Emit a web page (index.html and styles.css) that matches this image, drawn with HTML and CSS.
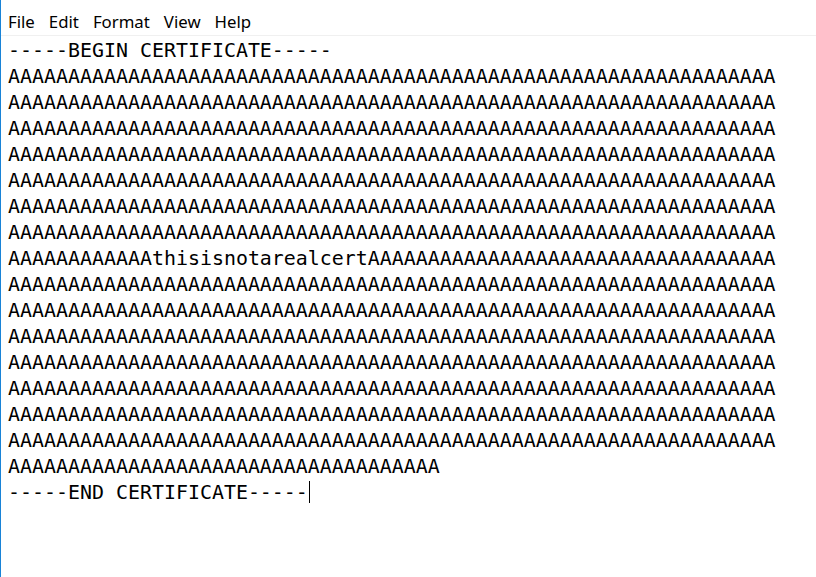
FILE: index.html
```html
<!DOCTYPE html>
<html>
<head>
<meta charset="utf-8">
<link rel="stylesheet" href="styles.css">
</head>
<body>
<div class="window">
  <nav class="menubar">
    <span class="menu-item">File</span>
    <span class="menu-item">Edit</span>
    <span class="menu-item">Format</span>
    <span class="menu-item">View</span>
    <span class="menu-item">Help</span>
  </nav>
  <div class="editor">
    <div class="line">-----BEGIN CERTIFICATE-----</div>
    <div class="line">AAAAAAAAAAAAAAAAAAAAAAAAAAAAAAAAAAAAAAAAAAAAAAAAAAAAAAAAAAAAAAAA</div>
    <div class="line">AAAAAAAAAAAAAAAAAAAAAAAAAAAAAAAAAAAAAAAAAAAAAAAAAAAAAAAAAAAAAAAA</div>
    <div class="line">AAAAAAAAAAAAAAAAAAAAAAAAAAAAAAAAAAAAAAAAAAAAAAAAAAAAAAAAAAAAAAAA</div>
    <div class="line">AAAAAAAAAAAAAAAAAAAAAAAAAAAAAAAAAAAAAAAAAAAAAAAAAAAAAAAAAAAAAAAA</div>
    <div class="line">AAAAAAAAAAAAAAAAAAAAAAAAAAAAAAAAAAAAAAAAAAAAAAAAAAAAAAAAAAAAAAAA</div>
    <div class="line">AAAAAAAAAAAAAAAAAAAAAAAAAAAAAAAAAAAAAAAAAAAAAAAAAAAAAAAAAAAAAAAA</div>
    <div class="line">AAAAAAAAAAAAAAAAAAAAAAAAAAAAAAAAAAAAAAAAAAAAAAAAAAAAAAAAAAAAAAAA</div>
    <div class="line">AAAAAAAAAAAAthisisnotarealcertAAAAAAAAAAAAAAAAAAAAAAAAAAAAAAAAAA</div>
    <div class="line">AAAAAAAAAAAAAAAAAAAAAAAAAAAAAAAAAAAAAAAAAAAAAAAAAAAAAAAAAAAAAAAA</div>
    <div class="line">AAAAAAAAAAAAAAAAAAAAAAAAAAAAAAAAAAAAAAAAAAAAAAAAAAAAAAAAAAAAAAAA</div>
    <div class="line">AAAAAAAAAAAAAAAAAAAAAAAAAAAAAAAAAAAAAAAAAAAAAAAAAAAAAAAAAAAAAAAA</div>
    <div class="line">AAAAAAAAAAAAAAAAAAAAAAAAAAAAAAAAAAAAAAAAAAAAAAAAAAAAAAAAAAAAAAAA</div>
    <div class="line">AAAAAAAAAAAAAAAAAAAAAAAAAAAAAAAAAAAAAAAAAAAAAAAAAAAAAAAAAAAAAAAA</div>
    <div class="line">AAAAAAAAAAAAAAAAAAAAAAAAAAAAAAAAAAAAAAAAAAAAAAAAAAAAAAAAAAAAAAAA</div>
    <div class="line">AAAAAAAAAAAAAAAAAAAAAAAAAAAAAAAAAAAAAAAAAAAAAAAAAAAAAAAAAAAAAAAA</div>
    <div class="line">AAAAAAAAAAAAAAAAAAAAAAAAAAAAAAAAAAAA</div>
    <div class="line">-----END CERTIFICATE-----<span class="caret"></span></div>
  </div>
</div>
</body>
</html>
```

FILE: styles.css
```css
html, body {
  margin: 0;
  padding: 0;
  background: #ffffff;
}

.window {
  box-sizing: border-box;
  width: 816px;
  height: 577px;
  border-left: 1px solid #1883d7;
  background: #ffffff;
  overflow: hidden;
}

.menubar {
  display: flex;
  align-items: center;
  height: 35px;
  padding-left: 0;
  border-bottom: 1px solid #f0f0f0;
  font-family: "Noto Sans", "Open Sans", sans-serif;
  font-size: 16.8px;
  color: #000000;
}

.menu-item {
  padding: 0 7px;
  margin-top: 8px;
}

.editor {
  padding: 2px 0 0 7px;
  font-family: "DejaVu Sans Mono", "Liberation Mono", monospace;
  font-size: 19.93px;
  line-height: 26px;
  color: #000000;
}

.line {
  height: 26px;
  white-space: pre;
}

.caret {
  display: inline-block;
  width: 1px;
  height: 22px;
  background: #000000;
  vertical-align: -4px;
  margin-left: 1px;
}
```
